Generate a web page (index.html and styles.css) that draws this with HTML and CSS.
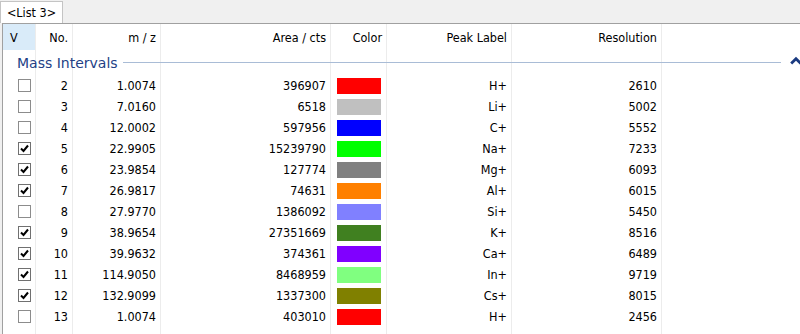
FILE: index.html
```html
<!DOCTYPE html>
<html>
<head>
<meta charset="utf-8">
<link rel="stylesheet" href="styles.css">
</head>
<body>
<div class="tabs"><div class="tab">&lt;List 3&gt;</div></div>
<div class="panel">
  <div class="row head">
    <div class="c c-v sel">V</div>
    <div class="c r">No.</div>
    <div class="c r">m / z</div>
    <div class="c r">Area / cts</div>
    <div class="c r">Color</div>
    <div class="c r">Peak Label</div>
    <div class="c r">Resolution</div>
    <div class="c last"></div>
  </div>
  <div class="row group">
    <div class="c g1"></div><div class="c g2"></div><div class="c g3"></div><div class="c g4"></div>
    <div class="c g5"></div><div class="c g6"></div><div class="c g7"></div><div class="c g8 last"></div>
    <div class="gtitle">
      <span class="gname">Mass Intervals</span>
      <span class="gline"></span>
      <svg class="chev" width="12" height="9" viewBox="0 0 12 9"><path d="M1.2 7.5 L6 2.7 L10.8 7.5" fill="none" stroke="#1a3a80" stroke-width="2.8"/></svg>
    </div>
  </div>

  <div class="row"><div class="c c-v"><span class="cb"></span></div><div class="c r">2</div><div class="c r">1.0074</div><div class="c r">396907</div><div class="c"><span class="sw" style="background:#ff0000"></span></div><div class="c r">H+</div><div class="c r">2610</div><div class="c last"></div></div>
  <div class="row"><div class="c c-v"><span class="cb"></span></div><div class="c r">3</div><div class="c r">7.0160</div><div class="c r">6518</div><div class="c"><span class="sw" style="background:#c0c0c0"></span></div><div class="c r">Li+</div><div class="c r">5002</div><div class="c last"></div></div>
  <div class="row"><div class="c c-v"><span class="cb"></span></div><div class="c r">4</div><div class="c r">12.0002</div><div class="c r">597956</div><div class="c"><span class="sw" style="background:#0000ff"></span></div><div class="c r">C+</div><div class="c r">5552</div><div class="c last"></div></div>
  <div class="row"><div class="c c-v"><span class="cb on"><svg width="11" height="11" viewBox="0 0 11 11"><path d="M2 5.5 L4.5 8 L9 2.5" fill="none" stroke="#000" stroke-width="2"/></svg></span></div><div class="c r">5</div><div class="c r">22.9905</div><div class="c r">15239790</div><div class="c"><span class="sw" style="background:#00ff00"></span></div><div class="c r">Na+</div><div class="c r">7233</div><div class="c last"></div></div>
  <div class="row"><div class="c c-v"><span class="cb on"><svg width="11" height="11" viewBox="0 0 11 11"><path d="M2 5.5 L4.5 8 L9 2.5" fill="none" stroke="#000" stroke-width="2"/></svg></span></div><div class="c r">6</div><div class="c r">23.9854</div><div class="c r">127774</div><div class="c"><span class="sw" style="background:#808080"></span></div><div class="c r">Mg+</div><div class="c r">6093</div><div class="c last"></div></div>
  <div class="row"><div class="c c-v"><span class="cb on"><svg width="11" height="11" viewBox="0 0 11 11"><path d="M2 5.5 L4.5 8 L9 2.5" fill="none" stroke="#000" stroke-width="2"/></svg></span></div><div class="c r">7</div><div class="c r">26.9817</div><div class="c r">74631</div><div class="c"><span class="sw" style="background:#ff8000"></span></div><div class="c r">Al+</div><div class="c r">6015</div><div class="c last"></div></div>
  <div class="row"><div class="c c-v"><span class="cb"></span></div><div class="c r">8</div><div class="c r">27.9770</div><div class="c r">1386092</div><div class="c"><span class="sw" style="background:#8080ff"></span></div><div class="c r">Si+</div><div class="c r">5450</div><div class="c last"></div></div>
  <div class="row"><div class="c c-v"><span class="cb on"><svg width="11" height="11" viewBox="0 0 11 11"><path d="M2 5.5 L4.5 8 L9 2.5" fill="none" stroke="#000" stroke-width="2"/></svg></span></div><div class="c r">9</div><div class="c r">38.9654</div><div class="c r">27351669</div><div class="c"><span class="sw" style="background:#408020"></span></div><div class="c r">K+</div><div class="c r">8516</div><div class="c last"></div></div>
  <div class="row"><div class="c c-v"><span class="cb on"><svg width="11" height="11" viewBox="0 0 11 11"><path d="M2 5.5 L4.5 8 L9 2.5" fill="none" stroke="#000" stroke-width="2"/></svg></span></div><div class="c r">10</div><div class="c r">39.9632</div><div class="c r">374361</div><div class="c"><span class="sw" style="background:#8000ff"></span></div><div class="c r">Ca+</div><div class="c r">6489</div><div class="c last"></div></div>
  <div class="row"><div class="c c-v"><span class="cb on"><svg width="11" height="11" viewBox="0 0 11 11"><path d="M2 5.5 L4.5 8 L9 2.5" fill="none" stroke="#000" stroke-width="2"/></svg></span></div><div class="c r">11</div><div class="c r">114.9050</div><div class="c r">8468959</div><div class="c"><span class="sw" style="background:#80ff80"></span></div><div class="c r">In+</div><div class="c r">9719</div><div class="c last"></div></div>
  <div class="row"><div class="c c-v"><span class="cb on"><svg width="11" height="11" viewBox="0 0 11 11"><path d="M2 5.5 L4.5 8 L9 2.5" fill="none" stroke="#000" stroke-width="2"/></svg></span></div><div class="c r">12</div><div class="c r">132.9099</div><div class="c r">1337300</div><div class="c"><span class="sw" style="background:#808000"></span></div><div class="c r">Cs+</div><div class="c r">8015</div><div class="c last"></div></div>
  <div class="row"><div class="c c-v"><span class="cb"></span></div><div class="c r">13</div><div class="c r">1.0074</div><div class="c r">403010</div><div class="c"><span class="sw" style="background:#ff0000"></span></div><div class="c r">H+</div><div class="c r">2456</div><div class="c last"></div></div>
  <div class="row"><div class="c c-v"></div><div class="c r"></div><div class="c r"></div><div class="c r"></div><div class="c"></div><div class="c r"></div><div class="c r"></div><div class="c last"></div></div>
</div>
</body>
</html>
```

FILE: styles.css
```css
html, body {
  margin: 0;
  padding: 0;
  height: 334px;
  overflow: hidden;
  background: #f0f0f0;
  font-family: "DejaVu Sans Condensed", "DejaVu Sans", sans-serif;
  font-size: 12.5px;
  color: #000;
}

.tabs {
  height: 23px;
  display: flex;
  align-items: flex-end;
}

.tab {
  height: 22px;
  box-sizing: border-box;
  width: 63px;
  background: #fff;
  border: 1px solid #c4c4c4;
  border-bottom: none;
  display: flex;
  align-items: center;
  justify-content: center;
  padding-bottom: 1px;
}

.panel {
  margin-left: 2px;
  border-top: 1px solid #a0a0a0;
  border-left: 1px solid #a0a0a0;
  background: #fff;
  height: 320px;
  overflow: hidden;
}

.row {
  display: grid;
  grid-template-columns: 33px 37px 88px 170px 56px 125px 150px 1fr;
  height: 21px;
}

.c {
  border-right: 1px solid #ececec;
  display: flex;
  align-items: center;
  min-width: 0;
  white-space: nowrap;
}

.c.r {
  justify-content: flex-end;
  padding-right: 4px;
}

.c.last {
  border-right: none;
}

.head {
  height: 26px;
}

.head .c-v {
  padding-left: 7px;
}

.sel {
  background: #d9ebf9;
}

.group {
  height: 25px;
}

.group .c { grid-row: 1; }
.group .g1 { grid-column: 1; }
.group .g2 { grid-column: 2; }
.group .g3 { grid-column: 3; }
.group .g4 { grid-column: 4; }
.group .g5 { grid-column: 5; }
.group .g6 { grid-column: 6; }
.group .g7 { grid-column: 7; }
.group .g8 { grid-column: 8; }

.gtitle {
  grid-column: 1 / -1;
  grid-row: 1;
  display: flex;
  align-items: center;
  padding-left: 14px;
}

.gname {
  font-family: "DejaVu Sans", sans-serif;
  font-size: 14px;
  color: #233f86;
  margin-right: 5px;
}

.gline {
  flex: 1;
  height: 1px;
  background: #a9bcd6;
  margin-right: 9px;
}

.chev {
  display: block;
  flex: none;
  margin-right: -2px;
  margin-top: -4px;
}

.c-v {
  padding-left: 15px;
}

.cb {
  width: 13px;
  height: 13px;
  box-sizing: border-box;
  border: 1px solid #8c8c8c;
  background: #fff;
  display: flex;
  align-items: center;
  justify-content: center;
}

.cb.on {
  border-color: #707070;
}

.cb svg {
  display: block;
}

.sw {
  display: block;
  width: 44px;
  height: 16px;
  margin-left: 6px;
  margin-top: 1px;
}
```
